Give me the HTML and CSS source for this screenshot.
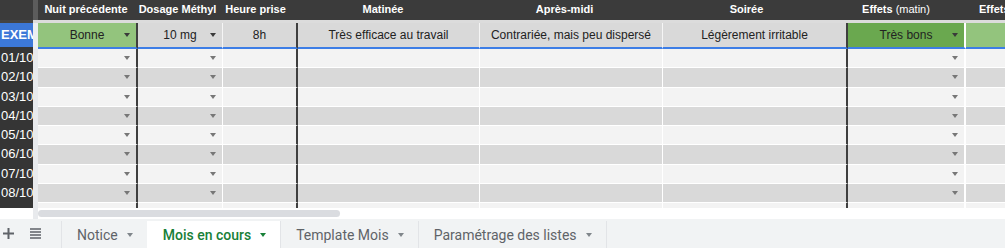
FILE: index.html
```html
<!DOCTYPE html>
<html lang="fr">
<head>
<meta charset="utf-8">
<title>Suivi</title>
<link rel="stylesheet" href="styles.css">
</head>
<body>
<div class="sheet">
  <div class="row head">
    <div class="rh"></div><div class="gp"></div>
    <div class="c nuit">Nuit précédente</div>
    <div class="c dose">Dosage Méthyl</div>
    <div class="c heure">Heure prise</div>
    <div class="c mat">Matinée</div>
    <div class="c apm">Après-midi</div>
    <div class="c soir">Soirée</div>
    <div class="c eff">Effets <span class="lt">(matin)</span></div>
    <div class="c last"><span class="cut">Effets <span class="lt">(après-midi)</span></span></div>
  </div>
  <div class="row strip">
    <div class="rh"></div><div class="gp"></div><div class="fill"></div>
  </div>
  <div class="row ex">
    <div class="rh">EXEM</div><div class="gp"></div>
    <div class="c nuit dd g1"><span></span><span class="t">Bonne</span><span class="arr"></span></div>
    <div class="c dose dd"><span></span><span class="t">10 mg</span><span class="arr"></span></div>
    <div class="c heure">8h</div>
    <div class="c mat">Très efficace au travail</div>
    <div class="c apm">Contrariée, mais peu dispersé</div>
    <div class="c soir">Légèrement irritable</div>
    <div class="c eff dd g2"><span></span><span class="t">Très bons</span><span class="arr"></span></div>
    <div class="c last g1"></div>
  </div>
  <div class="row d odd"><div class="rh">01/10/</div><div class="gp"></div><div class="c nuit dd"><span></span><span></span><span class="arr"></span></div><div class="c dose dd"><span></span><span></span><span class="arr"></span></div><div class="c heure"></div><div class="c mat"></div><div class="c apm"></div><div class="c soir"></div><div class="c eff dd"><span></span><span></span><span class="arr"></span></div><div class="c last"></div></div>
  <div class="row d even"><div class="rh">02/10/</div><div class="gp"></div><div class="c nuit dd"><span></span><span></span><span class="arr"></span></div><div class="c dose dd"><span></span><span></span><span class="arr"></span></div><div class="c heure"></div><div class="c mat"></div><div class="c apm"></div><div class="c soir"></div><div class="c eff dd"><span></span><span></span><span class="arr"></span></div><div class="c last"></div></div>
  <div class="row d odd"><div class="rh">03/10/</div><div class="gp"></div><div class="c nuit dd"><span></span><span></span><span class="arr"></span></div><div class="c dose dd"><span></span><span></span><span class="arr"></span></div><div class="c heure"></div><div class="c mat"></div><div class="c apm"></div><div class="c soir"></div><div class="c eff dd"><span></span><span></span><span class="arr"></span></div><div class="c last"></div></div>
  <div class="row d even"><div class="rh">04/10/</div><div class="gp"></div><div class="c nuit dd"><span></span><span></span><span class="arr"></span></div><div class="c dose dd"><span></span><span></span><span class="arr"></span></div><div class="c heure"></div><div class="c mat"></div><div class="c apm"></div><div class="c soir"></div><div class="c eff dd"><span></span><span></span><span class="arr"></span></div><div class="c last"></div></div>
  <div class="row d odd"><div class="rh">05/10/</div><div class="gp"></div><div class="c nuit dd"><span></span><span></span><span class="arr"></span></div><div class="c dose dd"><span></span><span></span><span class="arr"></span></div><div class="c heure"></div><div class="c mat"></div><div class="c apm"></div><div class="c soir"></div><div class="c eff dd"><span></span><span></span><span class="arr"></span></div><div class="c last"></div></div>
  <div class="row d even"><div class="rh">06/10/</div><div class="gp"></div><div class="c nuit dd"><span></span><span></span><span class="arr"></span></div><div class="c dose dd"><span></span><span></span><span class="arr"></span></div><div class="c heure"></div><div class="c mat"></div><div class="c apm"></div><div class="c soir"></div><div class="c eff dd"><span></span><span></span><span class="arr"></span></div><div class="c last"></div></div>
  <div class="row d odd"><div class="rh">07/10/</div><div class="gp"></div><div class="c nuit dd"><span></span><span></span><span class="arr"></span></div><div class="c dose dd"><span></span><span></span><span class="arr"></span></div><div class="c heure"></div><div class="c mat"></div><div class="c apm"></div><div class="c soir"></div><div class="c eff dd"><span></span><span></span><span class="arr"></span></div><div class="c last"></div></div>
  <div class="row d even"><div class="rh">08/10/</div><div class="gp"></div><div class="c nuit dd"><span></span><span></span><span class="arr"></span></div><div class="c dose dd"><span></span><span></span><span class="arr"></span></div><div class="c heure"></div><div class="c mat"></div><div class="c apm"></div><div class="c soir"></div><div class="c eff dd"><span></span><span></span><span class="arr"></span></div><div class="c last"></div></div>
  <div class="row foot">
    <div class="rh"></div><div class="gp"></div>
    <div class="c nuit"></div><div class="c dose"></div><div class="c heure"></div><div class="c mat"></div><div class="c apm"></div><div class="c soir"></div><div class="c eff"></div><div class="c last"></div>
  </div>
  <div class="row scroll">
    <div class="rh"></div><div class="gp"></div>
    <div class="track"><div class="pill"></div></div>
  </div>
</div>
<div class="tabs">
  <div class="ico plus">
    <svg width="11" height="11" viewBox="0 0 11 11"><path d="M5.5 0v11M0 5.5h11" stroke="#5f6368" stroke-width="2"/></svg>
  </div>
  <div class="ico list">
    <svg width="11" height="11" viewBox="0 0 11 11"><path d="M0 1h11M0 4h11M0 7h11M0 10h11" stroke="#5f6368" stroke-width="1.6"/></svg>
  </div>
  <div class="tab">Notice<span class="tarr"></span></div>
  <div class="tab active">Mois en cours<span class="tarr"></span></div>
  <div class="tab">Template Mois<span class="tarr"></span></div>
  <div class="tab">Paramétrage des listes<span class="tarr"></span></div>
</div>
</body>
</html>
```
FILE: styles.css
```css
html, body {
  margin: 0;
  padding: 0;
}
body {
  width: 1005px;
  height: 248px;
  overflow: hidden;
  background: #fff;
  font-family: "Liberation Sans", Arial, sans-serif;
}
.sheet {
  display: flex;
  flex-direction: column;
  height: 219px;
  overflow: hidden;
}
.row {
  display: flex;
  flex-shrink: 0;
  overflow: hidden;
}
.rh {
  width: 33px;
  flex-shrink: 0;
  overflow: hidden;
  white-space: nowrap;
  box-sizing: border-box;
}
.gp {
  width: 5px;
  flex-shrink: 0;
  background: #e8eaed;
}
.c {
  flex-shrink: 0;
  box-sizing: content-box;
  display: flex;
  align-items: center;
  justify-content: center;
  white-space: nowrap;
  overflow: hidden;
}
.nuit { width: 98px; border-right: 2px solid #3f3f3f; }
.dose { width: 84px; border-right: 1px solid #fff; }
.heure { width: 73px; border-right: 2px solid #3f3f3f; }
.mat { width: 181px; border-right: 1px solid #fff; }
.apm { width: 182px; border-right: 1px solid #fff; }
.soir { width: 183px; border-right: 2px solid #3f3f3f; }
.eff { width: 116px; border-right: 2px solid #fff; }
.c.last { flex: 1 1 0; min-width: 0; width: auto; }

/* header */
.head {
  height: 20px;
  background: #3b3b3b;
  color: #fff;
  font-size: 11px;
  font-weight: bold;
}
.head .rh { background: #3b3b3b; }
.head .gp { background: #5c5c5c; }
.head .c { border-right-color: #3b3b3b; }
.head .lt { font-weight: normal; margin-left: 3px; }
.head .c { padding-bottom: 2px; box-sizing: border-box; height: 20px; }
.head .c.last {
  display: block;
  padding: 3px 0 0 0;
}
.cut {
  display: block;
  margin-left: 24px;
  white-space: nowrap;
}
.head .cut .lt { margin-left: 0; }

.strip {
  height: 3px;
  background: #dcdcdc;
}
.strip .rh { background: #444; }
.strip .gp { background: #dcdcdc; }
.fill { flex: 1; }

/* example row */
.ex {
  height: 26px;
  font-size: 12px;
  color: #222;
}
.ex .rh {
  background: #3c78d8;
  color: #fff;
  font-weight: bold;
  font-size: 13px;
  line-height: 24px;
  padding-left: 1px;
  border-bottom: 2px solid #353535;
}
.ex .gp { background: #eceff1; }
.ex .c {
  background: #d9d9d9;
  height: 24px;
  border-bottom: 2px solid #3d7ee6;
}
.ex .mat, .ex .apm, .ex .dose { border-right-color: #f5f5f5; }
.ex .g1 { background: #93c47d; }
.ex .g2 { background: #6aa84f; }
.ex .arr { border-top-color: #3a3a3a; }

.dd {
  display: grid;
  grid-template-columns: 18px 1fr 18px;
  align-items: center;
}
.dd .t { text-align: center; }
.arr {
  justify-self: center;
  width: 0;
  height: 0;
  border-left: 3.5px solid transparent;
  border-right: 3.5px solid transparent;
  border-top: 4px solid #777;
}

/* data rows */
.d {
  height: 19.25px;
}
.d .rh {
  background: #353535;
  color: #fff;
  font-size: 13px;
  line-height: 17px;
  padding-left: 1px;
  height: 19.25px;
}
.d .c {
  border-bottom: 1.5px solid #fff;
  box-sizing: border-box;
}
.odd .c { background: #f3f3f3; }
.even .c { background: #d9d9d9; }
.d .nuit { width: 100px; }
.d .dose { width: 85px; }
.d .heure { width: 75px; }
.d .mat { width: 182px; }
.d .apm { width: 183px; }
.d .soir { width: 185px; }
.d .eff { width: 118px; }

.foot {
  height: 5px;
}
.foot .rh { background: #353535; }
.foot .c { background: #f3f3f3; height: 5px; }

.scroll {
  height: 11px;
  align-items: stretch;
}
.scroll .rh { background: #fff; }
.scroll .gp { background: #e8eaed; }
.track {
  flex: 1;
  padding-top: 2px;
}
.pill {
  width: 302px;
  height: 7px;
  background: #dadce0;
  border-radius: 4px;
}

/* tabs */
.tabs {
  height: 29px;
  background: #f1f3f4;
  display: flex;
  align-items: stretch;
  font-family: Roboto, "Liberation Sans", Arial, sans-serif;
  font-size: 14px;
  color: #5f6368;
}
.ico {
  display: flex;
  align-items: center;
  justify-content: center;
}
.plus { width: 16px; }
.list { width: 26px; margin-left: 6px; }
.tabs .ico svg { display: block; }
.tab {
  display: flex;
  align-items: center;
  padding: 0 14px 0 15px;
  border-left: 1px solid #e2e4e7;
  margin-top: 2px;
  white-space: nowrap;
}
.list + .tab { margin-left: 13px; }
.tab:last-child { border-right: 1px solid #e2e4e7; }
.tab.active {
  background: #fff;
  color: #188038;
  font-weight: 500;
  border-left-color: #fff;
}
.tarr {
  width: 0;
  height: 0;
  margin-left: 9px;
  border-left: 3.5px solid transparent;
  border-right: 3.5px solid transparent;
  border-top: 4px solid #80868b;
}
.active .tarr { border-top-color: #188038; }
```
